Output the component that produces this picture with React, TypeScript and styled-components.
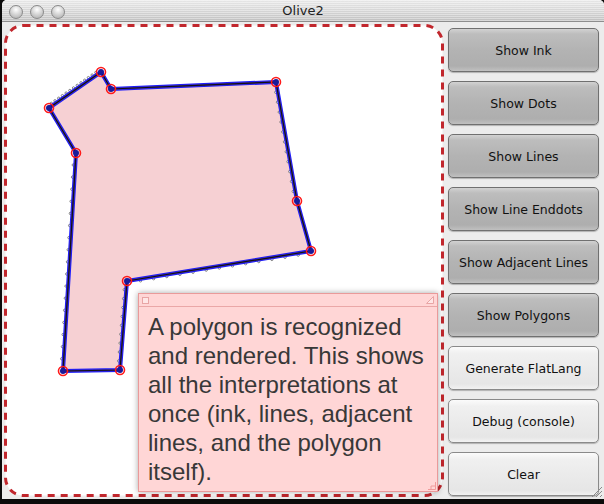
import React from "react";
import styled, { createGlobalStyle } from "styled-components";

const Global = createGlobalStyle`
  html, body { margin: 0; padding: 0; background: #0b0b0b; }
  body { width: 604px; height: 504px; overflow: hidden; }
`;

const Window = styled.div`
  margin-left: 2px;
  width: 602px;
  height: 499px;
  background: #ececec;
  border-radius: 5px 5px 0 0;
  display: flex;
  flex-direction: column;
  overflow: hidden;
  position: relative;
  font-family: "DejaVu Sans", "Liberation Sans", sans-serif;
`;

const TitleBar = styled.div`
  height: 21px;
  flex: none;
  border-bottom: 1px solid #8e8e8e;
  background:
    repeating-linear-gradient(180deg, rgba(255,255,255,0.35) 0 1px, rgba(0,0,0,0.02) 1px 2px),
    linear-gradient(180deg, #ececec 0%, #d6d6d6 60%, #c4c4c4 100%);
  display: flex;
  align-items: center;
  position: relative;
`;

const Lights = styled.div`
  display: flex;
  gap: 7px;
  padding-left: 7px;
  padding-top: 2px;
`;

const Light = styled.div`
  width: 14px;
  height: 14px;
  border-radius: 50%;
  border: 1px solid #8a8a8a;
  background: radial-gradient(circle at 50% 30%, #ffffff 0%, #dcdcdc 40%, #a9a9a9 100%);
  box-sizing: border-box;
`;

const Title = styled.div`
  position: absolute;
  left: 0;
  right: 0;
  top: 0;
  height: 21px;
  line-height: 22px;
  text-align: center;
  font-size: 13px;
  color: #222;
  font-family: "DejaVu Sans", sans-serif;
  pointer-events: none;
`;

const Content = styled.div`
  flex: 1;
  display: flex;
`;

const Canvas = styled.div`
  width: 443px;
  height: 477px;
  position: relative;
  flex: none;
`;

const Drawing = styled.svg`
  position: absolute;
  inset: 0;
`;

const Note = styled.div`
  position: absolute;
  left: 136px;
  top: 271px;
  width: 298px;
  height: 197px;
  background: #ffd6d6;
  border: 1px solid #e99a9a;
  box-shadow: 0 0 6px rgba(0, 0, 0, 0.35);
  display: flex;
  flex-direction: column;
`;

const NoteHeader = styled.div`
  height: 12px;
  flex: none;
  border-bottom: 1px solid #eaa7a7;
  display: flex;
  justify-content: space-between;
  align-items: center;
  padding: 0 3px;
`;

const NoteText = styled.div`
  padding: 5px 4px 0 9px;
  font-family: "Liberation Sans", Arial, sans-serif;
  font-size: 24px;
  line-height: 29px;
  color: #383838;
`;

const NoteGrip = styled.svg`
  position: absolute;
  right: 1px;
  bottom: 1px;
`;

const Buttons = styled.div`
  flex: 1;
  display: flex;
  flex-direction: column;
  gap: 9px;
  padding: 6px 3px 0 3px;
`;

const Button = styled.button<{ $dark?: boolean }>`
  height: 44px;
  width: 151px;
  flex: none;
  border: 1px solid ${(p) => (p.$dark ? "#707070" : "#8a8a8a")};
  border-radius: 5px;
  background: ${(p) =>
    p.$dark
      ? "linear-gradient(180deg, #d2d2d2 0%, #bdbdbd 12%, #b3b3b3 50%, #aeaeae 88%, #c0c0c0 100%)"
      : "linear-gradient(180deg, #fbfbfb 0%, #f0f0f0 15%, #ebebeb 50%, #e6e6e6 88%, #f2f2f2 100%)"};
  box-shadow: 0 1px 1px rgba(0, 0, 0, 0.25);
  font-family: "DejaVu Sans", sans-serif;
  font-size: 12.5px;
  color: #111;
  padding: 0;
`;

const Grip = styled.svg`
  position: absolute;
  right: 1px;
  bottom: 1px;
`;

const pts: [number, number][] = [
  [101, 72],
  [111, 89],
  [276, 82],
  [297, 201],
  [311, 251],
  [127, 281],
  [120, 370],
  [63, 371],
  [76, 153],
  [49, 108],
];

const ox = 2;
const oy = 22;
const local = pts.map(([x, y]) => [x - ox, y - oy] as [number, number]);
const poly = local.map((p) => p.join(",")).join(" ");

function inkDots(a: [number, number], b: [number, number], n: number, off: number) {
  const out: React.ReactNode[] = [];
  const dx = b[0] - a[0];
  const dy = b[1] - a[1];
  const len = Math.hypot(dx, dy);
  const nx = -dy / len;
  const ny = dx / len;
  for (let i = 1; i < n; i++) {
    const t = i / n;
    out.push(
      <circle
        key={`${a[0]}-${i}`}
        cx={a[0] + dx * t + nx * off}
        cy={a[1] + dy * t + ny * off}
        r={1.2}
        fill="#fff"
        stroke="#555"
        strokeWidth={0.7}
      />
    );
  }
  return out;
}

const labels: { t: string; dark: boolean }[] = [
  { t: "Show Ink", dark: true },
  { t: "Show Dots", dark: true },
  { t: "Show Lines", dark: true },
  { t: "Show Line Enddots", dark: true },
  { t: "Show Adjacent Lines", dark: true },
  { t: "Show Polygons", dark: true },
  { t: "Generate FlatLang", dark: false },
  { t: "Debug (console)", dark: false },
  { t: "Clear", dark: false },
];

export default function App() {
  return (
    <>
      <Global />
      <Window>
        <TitleBar>
          <Lights>
            <Light />
            <Light />
            <Light />
          </Lights>
          <Title>Olive2</Title>
        </TitleBar>
        <Content>
          <Canvas>
            <Drawing width={443} height={477} viewBox="0 0 443 477">
              <rect
                x={3.5}
                y={3.5}
                width={437}
                height={470}
                rx={18}
                ry={18}
                fill="#ffffff"
                stroke="#c1272d"
                strokeWidth={3}
                strokeDasharray="7 6"
              />
              <polygon points={poly} fill="#f6d0d3" stroke="none" />
              {inkDots(local[9], local[0], 14, -2.5)}
              {inkDots(local[2], local[3], 12, 2)}
              {inkDots(local[4], local[5], 14, -2)}
              {inkDots(local[7], local[8], 18, -2)}
              {inkDots(local[5], local[6], 10, 2)}
              <polygon
                points={poly}
                fill="none"
                stroke="#1a1aff"
                strokeWidth={4}
                strokeLinejoin="round"
              />
              <polygon
                points={poly}
                fill="none"
                stroke="#5b3b8a"
                strokeWidth={2.2}
                strokeLinejoin="round"
                opacity={0.7}
              />
              <polygon
                points={poly}
                fill="none"
                stroke="#111"
                strokeWidth={1.2}
                strokeLinejoin="round"
              />
              {local.map(([x, y], i) => (
                <g key={i}>
                  <circle cx={x} cy={y} r={3} fill="#1a1a99" />
                  <circle cx={x} cy={y} r={4.5} fill="none" stroke="#ff1a1a" strokeWidth={1.6} />
                </g>
              ))}
            </Drawing>
            <Note>
              <NoteHeader>
                <svg width="7" height="7" viewBox="0 0 7 7">
                  <rect x="0.5" y="0.5" width="6" height="6" fill="#ffe6e6" stroke="#e8a5a5" />
                </svg>
                <svg width="8" height="8" viewBox="0 0 8 8">
                  <path d="M7.5 0.5 L7.5 7.5 L0.5 7.5 Z" fill="#ffe6e6" stroke="#e8a5a5" />
                </svg>
              </NoteHeader>
              <NoteText>
                A polygon is recognized and rendered. This shows all the interpretations at once (ink,
                lines, adjacent lines, and the polygon itself).
              </NoteText>
              <NoteGrip width="9" height="9" viewBox="0 0 9 9">
                <path d="M1 8.5 L8.5 8.5 L8.5 1 M4 8.5 L4 5 L8.5 5" fill="none" stroke="#f09a9a" strokeWidth="1" />
              </NoteGrip>
            </Note>
          </Canvas>
          <Buttons>
            {labels.map((b) => (
              <Button key={b.t} $dark={b.dark}>
                {b.t}
              </Button>
            ))}
          </Buttons>
        </Content>
        <Grip width="13" height="13" viewBox="0 0 13 13">
          <path d="M12 2 L2 12 M12 6 L6 12 M12 10 L10 12" stroke="#8a8a8a" strokeWidth="1" />
        </Grip>
      </Window>
    </>
  );
}
